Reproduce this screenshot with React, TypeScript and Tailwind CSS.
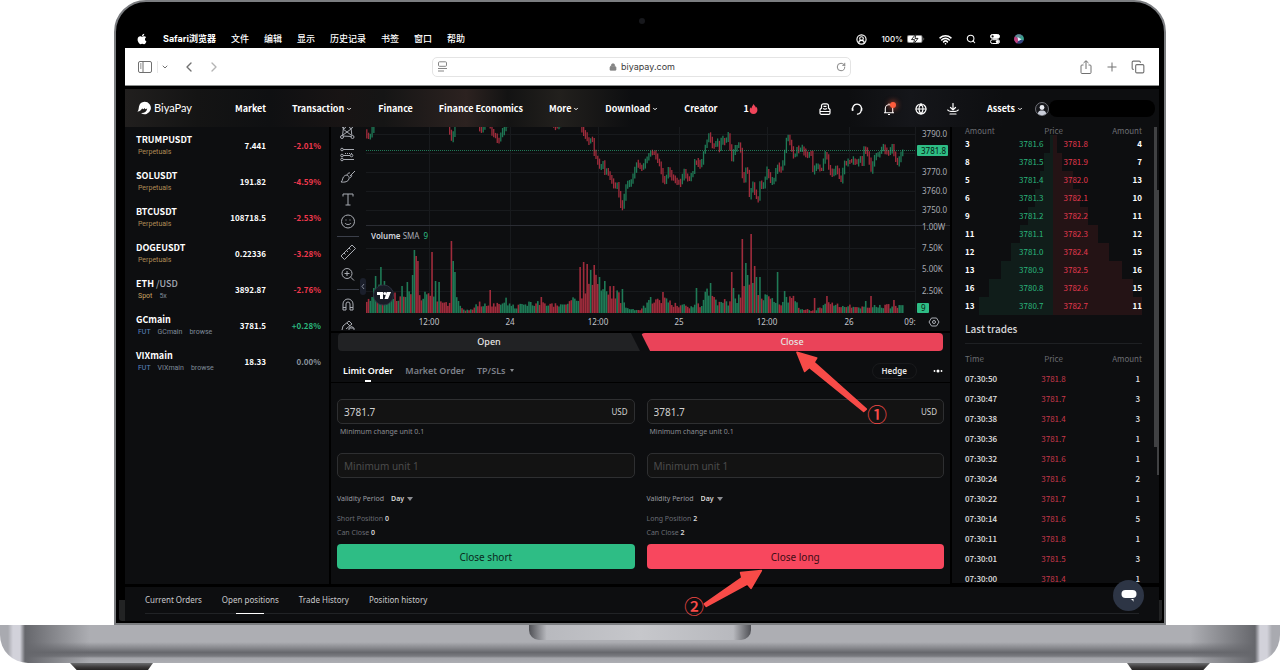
import React, { useState } from 'react';
import { FaApple } from 'react-icons/fa';
import {
    ChevronDown,
    ChevronLeft,
    ChevronRight,
    CircleUserRound,
    Copy,
    Globe,
    Lock,
    Plus,
    RotateCw,
    Search,
    Wifi
} from 'lucide-react';

const UP = '#1f7a56';
const DOWN = '#a02c3c';

const menus = ['文件', '编辑', '显示', '历史记录', '书签', '窗口', '帮助'];

const navItems = [
    { label: 'Market' },
    { label: 'Transaction', menu: true },
    { label: 'Finance' },
    { label: 'Finance Economics' },
    { label: 'More', menu: true },
    { label: 'Download', menu: true },
    { label: 'Creator' }
];

const watchlist = [
    { name: 'TRUMPUSDT', tags: ['Perpetuals'], price: '7.441', change: '-2.01%' },
    { name: 'SOLUSDT', tags: ['Perpetuals'], price: '191.82', change: '-4.59%' },
    { name: 'BTCUSDT', tags: ['Perpetuals'], price: '108718.5', change: '-2.53%' },
    { name: 'DOGEUSDT', tags: ['Perpetuals'], price: '0.22336', change: '-3.28%' },
    { name: 'ETH', quote: '/USD', tags: ['Spot', '5x'], price: '3892.87', change: '-2.76%' },
    { name: 'GCmain', tags: ['FUT', 'GCmain', 'browse'], price: '3781.5', change: '+0.28%' },
    { name: 'VIXmain', tags: ['FUT', 'VIXmain', 'browse'], price: '18.33', change: '0.00%' }
];

// [bid amount, bid price, ask price, ask amount, bid depth, ask depth]
const book: [number, string, string, number, number, number][] = [
    [3, '3781.6', '3781.8', 4, 3, 3],
    [8, '3781.5', '3781.9', 7, 9, 8],
    [5, '3781.4', '3782.0', 13, 13, 19],
    [6, '3781.3', '3782.1', 10, 18, 26],
    [9, '3781.2', '3782.2', 11, 25, 34],
    [11, '3781.1', '3782.3', 12, 33, 44],
    [12, '3781.0', '3782.4', 15, 42, 55],
    [13, '3780.9', '3782.5', 16, 53, 68],
    [16, '3780.8', '3782.6', 15, 65, 79],
    [13, '3780.7', '3782.7', 11, 75, 88]
];

const trades = [
    ['07:30:50', '3781.8', '1'],
    ['07:30:47', '3781.7', '3'],
    ['07:30:38', '3781.4', '3'],
    ['07:30:36', '3781.7', '1'],
    ['07:30:32', '3781.6', '1'],
    ['07:30:24', '3781.6', '2'],
    ['07:30:22', '3781.7', '1'],
    ['07:30:14', '3781.6', '5'],
    ['07:30:11', '3781.8', '1'],
    ['07:30:01', '3781.5', '3'],
    ['07:30:00', '3781.4', '1']
];

const pricePath: [number, number][] = [
    [0, 6], [3, 11], [5, 9], [7, 3], [9, -8], [80, -14], [84, 1], [87, 15], [89, 0], [92, -12], [112, -8], [115, 3], [117, 4], [119, -4],
    [124, -5], [127, 5], [133, 14], [137, 6], [140, -1], [146, -12], [184, -10], [190, 0], [193, 0], [197, -10], [214, -6], [217, 3],
    [220, 8], [224, 15], [227, 11], [229, 25], [232, 33], [235, 41], [238, 35], [239, 47], [242, 43], [246, 51], [249, 60],
    [252, 56], [254, 68], [256, 79], [258, 80], [260, 63], [262, 58], [266, 55], [269, 45], [272, 35], [274, 41], [278, 40],
    [282, 31], [286, 25], [290, 27], [295, 38], [299, 58], [303, 43], [307, 51], [315, 57], [319, 45], [324, 53], [328, 45],
    [330, 33], [336, 39], [339, 23], [344, 8], [348, 20], [352, 13], [354, 23], [357, 11], [360, 15], [364, 7], [366, 35],
    [369, 23], [375, 17], [376, 29], [378, 59], [382, 36], [385, 78], [387, 53], [390, 68], [393, 74], [395, 56], [398, 60],
    [402, 43], [406, 55], [409, 53], [412, 39], [417, 43], [419, 28], [422, 9], [426, 18], [429, 31], [432, 23], [437, 21],
    [441, 28], [446, 26], [448, 46], [452, 36], [456, 45], [461, 23], [463, 39], [467, 48], [471, 41], [476, 54], [479, 37],
    [487, 33], [492, 36], [495, 30], [497, 39], [499, 20], [503, 28], [506, 43], [510, 29], [514, 27], [518, 20], [523, 28],
    [527, 19], [532, 37], [536, 28], [538, 23]
];

const volumeBase: [number, number][] = [
    [0, 10], [14, 24], [29, 18], [39, 17], [45, 24], [54, 18], [64, 18], [70, 11], [81, 8], [90, 17], [94, 4], [104, 3],
    [114, 10], [121, 6], [129, 10], [139, 12], [149, 5], [154, 12], [164, 10], [179, 9], [192, 8], [204, 11], [211, 16],
    [219, 28], [224, 32], [234, 28], [244, 22], [254, 15], [262, 3], [274, 4], [282, 10], [296, 14], [309, 8], [324, 6],
    [334, 8], [340, 22], [349, 12], [364, 10], [374, 18], [380, 32], [394, 22], [402, 14], [414, 10], [424, 17], [434, 4],
    [444, 3], [454, 5], [464, 10], [474, 6], [484, 7], [494, 5], [509, 8], [519, 7], [534, 7], [538, 7]
];

const volumeSpikes: [number, number, string][] = [
    [7, 25, UP], [9, 37, UP], [14, 46, UP], [17, 32, UP], [35, 27, UP], [40, 31, UP], [45, 38, UP], [47, 63, UP],
    [49, 57, DOWN], [51, 52, DOWN], [52, 59, DOWN], [66, 61, DOWN], [68, 32, UP], [73, 31, UP], [84, 72, DOWN],
    [86, 52, UP], [88, 41, UP], [123, 23, DOWN], [174, 16, DOWN], [213, 46, DOWN], [217, 51, DOWN], [220, 49, DOWN],
    [224, 43, UP], [228, 48, DOWN], [233, 36, UP], [238, 32, UP], [247, 27, DOWN], [256, 24, UP], [284, 16, UP],
    [297, 21, DOWN], [330, 25, UP], [344, 30, UP], [365, 41, DOWN], [367, 25, UP], [376, 74, DOWN], [379, 50, UP],
    [381, 38, UP], [385, 79, DOWN], [387, 47, DOWN], [390, 36, UP], [394, 36, UP], [411, 41, UP], [417, 22, UP],
    [447, 15, DOWN], [461, 17, DOWN], [499, 12, UP], [505, 17, DOWN], [527, 13, DOWN]
];

const interpolate = (points: [number, number][], x: number) => {
    const i = Math.max(1, points.findIndex(p => p[0] >= x));
    const [x0, y0] = points[i - 1];
    const [x1, y1] = points[i];
    return y0 + ((y1 - y0) * (x - x0)) / (x1 - x0);
};

// repeatable jitter so the bars do not change between renders
const jitter = (n: number) => {
    const v = Math.sin(n * 127.1 + 11.7) * 43758.5453;
    return v - Math.floor(v);
};

const STEP = 1.763;
const bars = Array.from({ length: 305 }, (_, i) => {
    const x = i * STEP;
    const open = interpolate(pricePath, x);
    const close = interpolate(pricePath, Math.min(x + STEP, 538));
    const rising = Math.abs(close - open) > 1 ? close < open : jitter(i) > 0.5;
    const spike = volumeSpikes.find(s => Math.abs(s[0] - x) < STEP / 2);
    return {
        x,
        top: Math.min(open, close) - 1 - jitter(i + 400) * 3,
        bottom: Math.max(open, close) + 1 + jitter(i + 800) * 3,
        color: rising ? UP : DOWN,
        volume: spike ? spike[1] : interpolate(volumeBase, x) * (0.65 + jitter(i + 50) * 0.65),
        volumeColor: spike ? spike[2] : rising ? UP : DOWN
    };
});

const MenuBar = () => (
    <div className="flex h-[18px] items-center justify-between pr-[135px] pl-[11px] font-['Inter','Noto_Sans_CJK_SC',sans-serif] text-[9px] font-medium text-white">
        <div className="flex items-center gap-[15px]">
            <FaApple className="h-3 w-3" />
            <span className="font-bold">Safari浏览器</span>
            {menus.map(m => <span key={m}>{m}</span>)}
        </div>
        <div className="flex items-center gap-[14px]">
            <CircleUserRound className="h-[11px] w-[11px]" strokeWidth={2.5} />
            <span className="flex items-center gap-1 text-[8px]">
                100%
                <svg viewBox="0 0 18 10" className="h-[10px] w-[18px]">
                    <rect x="0" y="1" width="15.5" height="8" rx="2" fill="#8b8b8b" />
                    <rect x="1" y="2" width="13.500" height="6" rx="1" fill="#fff" />
                    <path d="M16.500 3.500v3c.8-.3 1-2.700 0-3z" fill="#8b8b8b" />
                    <path d="M9 0L4.500 5.600h3L6.500 10 11 4.400H8z" fill="#fff" stroke="#111" strokeWidth=".9" />
                </svg>
            </span>
            <Wifi className="h-[13px] w-[13px]" strokeWidth={3} />
            <Search className="h-[10px] w-[10px]" strokeWidth={2.5} />
            <svg viewBox="0 0 10 10" className="h-[10px] w-[10px]" fill="none" stroke="#fff">
                <rect x=".5" y=".5" width="9" height="3.800" rx="1.900" fill="#fff" />
                <rect x=".5" y="5.700" width="9" height="3.800" rx="1.900" />
                <circle cx="2.600" cy="2.400" r="1.100" fill="#111" stroke="none" />
                <circle cx="7.400" cy="7.600" r="1.600" fill="#fff" stroke="none" />
            </svg>
            <svg viewBox="0 0 10 10" className="h-[10px] w-[10px]">
                <circle cx="5" cy="5" r="4.800" fill="#33407c" />
                <path d="M5 5L1 2.300A4.800 4.800 0 0 0 3 9.400z" fill="#c2407f" />
                <path d="M5 5L1 2.300A4.800 4.800 0 0 1 8 1.300z" fill="#5f8d93" />
                <path d="M5 5L8 1.300A4.800 4.800 0 0 1 9.500 6.500z" fill="#3aa38c" />
                <path d="M3.500 3l4 2.300-3.200 2z" fill="#e8f0ff" />
            </svg>
        </div>
    </div>
);

const SafariToolbar = () => (
    <div className="grid h-[38px] grid-cols-[1fr_420px_1fr] items-center border-b border-[#8c8f8e] bg-white text-[#707070]">
        <div className="flex items-center pl-[13px]">
            <button aria-label="Sidebar">
                <svg viewBox="0 0 14 12" className="h-3 w-[14px]" fill="none" stroke="#6f6f6f">
                    <rect x=".5" y=".5" width="13" height="11" rx="1.500" />
                    <path d="M5 .5v11M2 3h1.500M2 5h1.500M2 7h1.500" />
                </svg>
            </button>
            <span className="ml-[5px] h-3 w-px bg-[#e8e8e8]" />
            <ChevronDown className="ml-[3px] h-2 w-2" strokeWidth={3} />
            <ChevronLeft className="ml-3 h-4 w-4" strokeWidth={2} />
            <ChevronRight className="ml-[9px] h-4 w-4 text-[#b4b4b4]" strokeWidth={2} />
        </div>
        <div className="mr-px flex h-5 items-center justify-between rounded-[5px] border border-[#e4e4e4] px-1">
            <svg viewBox="0 0 11 11" className="h-[11px] w-[11px]" fill="none" stroke="#858585">
                <rect x="1.500" y=".8" width="8" height="4.500" rx="1" />
                <path d="M1 7.500h9M1 10h6" />
            </svg>
            <span className="flex items-center gap-1 font-['Inter',sans-serif] text-[9px] text-[#3c3c3c]">
                <Lock className="h-2 w-2 fill-[#858585] text-[#858585]" />
                biyapay.com
            </span>
            <RotateCw className="h-[10px] w-[10px]" strokeWidth={2} />
        </div>
        <div className="flex items-center justify-end gap-3 pr-[14px]">
            <button aria-label="Share">
                <svg viewBox="0 0 14 14" className="h-[14px] w-[14px]" fill="none" stroke="#707070">
                    <path d="M4.500 5H3a1 1 0 0 0-1 1v6.500a1 1 0 0 0 1 1h8a1 1 0 0 0 1-1V6a1 1 0 0 0-1-1H9.500M7 9V1M4.500 3L7 .7 9.500 3" />
                </svg>
            </button>
            <Plus className="h-[14px] w-[14px]" strokeWidth={1.7} />
            <Copy className="h-[14px] w-[14px]" strokeWidth={1.9} />
        </div>
    </div>
);

const NavBar = () => (
    <header className="flex h-[38px] items-center justify-between bg-[#0d0e10] bg-[linear-gradient(90deg,#211f1e_0,#141414_7%,#0f1012_14%,#181414_21%,#151515_25%,#2c2220_33%,#131313_37%,#22201d_42%,#0d0e10_49%,#0d0e10_70%,#15161a_76%,#0d0e10_85%)] pl-3 font-['Noto_Sans_CJK_SC',sans-serif] text-[9px] leading-3 font-bold text-white">
        <div className="flex items-center">
            <a href="#" className="flex w-[70px] items-center gap-[3px] font-['Lato',sans-serif] text-[11px] font-normal">
                <svg viewBox="0 0 14 14" className="h-[14px] w-[14px]" fill="#fff">
                    <path d="M7.500 .8A6.200 6.200 0 1 1 4 12C6.500 12.500 9.800 11 10.200 7.500L8.300 8.300 7.700 7 6.500 8.300 5.200 7.500C4 8.500 3 10.800.3 10.600 1.700 9.500 1.500 8 2 5.500A6 6 0 0 1 7.500.8z" />
                </svg>
                BiyaPay
            </a>
            <nav className="ml-7 flex items-center gap-[26px] pt-px">
                {navItems.map(item => (
                    <a key={item.label} href="#" className="flex items-center gap-[2px] whitespace-nowrap">
                        {item.label}
                        {item.menu && <ChevronDown className="h-[6px] w-[6px]" strokeWidth={4} />}
                    </a>
                ))}
                <a href="#" className="flex items-center">
                    1
                    <svg viewBox="0 0 10 12" className="h-[10px] w-[9px]" fill="#f0455a">
                        <path d="M5 0C6 2 8 3 7.800 4.500 8.300 4.300 8.500 3.800 8.500 3.300 11 7 9.500 12 5 12S-.8 7.500 1.500 4C1.800 5 2.300 5.300 2.700 5.300 2.500 3 4.500 2 5 0z" />
                    </svg>
                </a>
            </nav>
        </div>
        <div className="flex items-center pt-px pr-1">
            <div className="flex items-center gap-5">
                <button aria-label="Orders">
                    <svg viewBox="0 0 12 12" className="h-3 w-3" fill="none" stroke="#fff" strokeWidth="1.200" strokeLinejoin="round">
                        <path d="M2.500 5.500V2.800A2 2 0 0 1 4.500.8h3a2 2 0 0 1 2 2v2.700" />
                        <path d="M2.500 5L1 6.500V10a1.300 1.300 0 0 0 1.300 1.300h7.400A1.300 1.300 0 0 0 11 10V6.500L9.500 5M1 8.500h10" />
                        <path d="M4.500 3.300h3M4.300 5.300c.6 1.200 2.800 1.200 3.400 0" />
                    </svg>
                </button>
                <button aria-label="Support">
                    <svg viewBox="0 0 12 12" className="h-3 w-3" fill="none" stroke="#fff" strokeWidth="1.300" strokeLinecap="round">
                        <path d="M2 7.200A4.400 4.400 0 1 1 10.200 7C10 9.500 8.500 10.900 6.500 11.200" />
                        <path d="M1.300 5.300v2M10.700 5.300v2" />
                    </svg>
                </button>
                <button aria-label="Notifications" className="relative">
                    <svg viewBox="0 0 12 12" className="h-3 w-3" fill="none" stroke="#fff" strokeWidth="1.100" strokeLinejoin="round">
                        <path d="M2.300 9.500V5.500a3.700 3.700 0 0 1 7.400 0v4M1 9.800h10M5 11.500h2M6 .5v1" />
                    </svg>
                    <span className="absolute -top-px -right-px h-[6px] w-[6px] rounded-full bg-[#ff5c3c] shadow-[0_0_5px_2px_rgba(255,92,60,0.4)]" />
                </button>
                <Globe className="h-3 w-3" strokeWidth={2.4} />
                <button aria-label="Download">
                    <svg viewBox="0 0 12 12" className="h-3 w-3" fill="none" stroke="#fff" strokeWidth="1.200" strokeLinecap="round">
                        <path d="M6 .5v6M3.500 4.500L6 7l2.500-2.500M.8 7c1 2 9.400 2 10.400 0M3 11h6" />
                    </svg>
                </button>
            </div>
            <a href="#" className="ml-7 flex items-center gap-[2px]">
                Assets
                <ChevronDown className="h-[6px] w-[6px]" strokeWidth={4} />
            </a>
            <svg viewBox="0 0 14 14" className="ml-3 h-[14px] w-[14px]">
                <circle cx="7" cy="7" r="6.500" fill="#16171b" stroke="#8a8d94" strokeWidth=".8" />
                <circle cx="7" cy="5.500" r="2.400" fill="#e9ebf2" />
                <path d="M2.800 11.500C3.300 9 5 8.500 7 8.500s3.700.5 4.200 3C9 13.800 5 13.800 2.800 11.500z" fill="#c9cdd9" />
            </svg>
            <span className="h-[17px] w-[106px] rounded-lg bg-black" />
        </div>
    </header>
);

const tagColor = (tag: string) => {
    switch (tag) {
        case 'Perpetuals': return 'text-[#b08c56]';
        case 'Spot': return 'text-[#c9a262]';
        case 'FUT': return 'text-[#5c88c0]';
        default: return 'text-[#7f8b99]';
    }
};

const changeColor = (change: string) => {
    if (change.startsWith('-')) return 'text-[#f0384d]';
    return change.startsWith('+') ? 'text-[#2ab67c]' : 'text-[#8b949e]';
};

const Watchlist = () => (
    <table className="mt-px w-full font-['Noto_Sans_CJK_SC',sans-serif]">
        <tbody>
            {watchlist.map(row => (
                <tr key={row.name} className="h-9 text-[8px] font-bold">
                    <td className="pl-[11px]">
                        <div className="text-[9px] leading-3 text-white">
                            {row.name} {row.quote && <span className="font-medium text-[#a5abb5]">{row.quote}</span>}
                        </div>
                        <div className="flex gap-[7px] pl-[2px] font-['Roboto',sans-serif] text-[7px] leading-3 font-normal">
                            {row.tags.map(t => <span key={t} className={tagColor(t)}>{t}</span>)}
                        </div>
                    </td>
                    <td className="text-right text-white">{row.price}</td>
                    <td className={`w-[63px] pr-2 text-right ${changeColor(row.change)}`}>{row.change}</td>
                </tr>
            ))}
        </tbody>
    </table>
);

const ChartTools = () => (
    <svg viewBox="0 0 35 203" className="h-[203px] w-[35px] shrink-0" fill="none" stroke="#a9acb3" strokeWidth="1">
        {/* pattern */}
        <path d="M11.500 9L12.500 0M11.500 9L21 9.500M21 9.500L20 1M12 2L20 8M12 8L20 2" />
        <circle cx="11" cy="10" r="1.500" fill="#0d0e10" /><circle cx="21.500" cy="10" r="1.500" fill="#0d0e10" />
        <circle cx="13" cy="0" r="1.500" /><circle cx="20" cy="0" r="1.500" />
        {/* prediction */}
        <path d="M12 22.500h11M12 28.500h7M12 32.500h11" />
        <path d="M14 26.500h7" strokeDasharray="1 1" />
        <circle cx="11" cy="22.500" r="1.300" fill="#0d0e10" /><circle cx="11" cy="28.500" r="1.300" fill="#0d0e10" />
        <circle cx="20.500" cy="28.500" r="1.300" fill="#0d0e10" /><circle cx="11" cy="32.500" r="1.300" fill="#0d0e10" />
        {/* brush */}
        <path d="M10 55c2-1 1-5 4-6.500 2-1 5 .5 4 3.500-1 2.800-4 3.500-8 3zM16 48.500c0-2 2-3 3-2.500M19 50.500c1.500 0 2-2 1.500-3M19 49L24 44" />
        {/* text */}
        <path d="M12 69.500V67h10v2.500M17 67v11M14.500 78h5" />
        {/* emoji */}
        <circle cx="17" cy="94.500" r="6.500" />
        <path d="M14 96c1 2 5 2 6 0M14.500 93h1M18.500 93h1" />
        <path d="M6 109.500h22M6 162.500h22" stroke="#3b3f4a" />
        {/* ruler */}
        <path d="M10 129l11-11 3.500 3.500-11 11zM13 126l1.500 1.500M15.500 123.500l1.500 1.500M18 121l1.500 1.500" />
        {/* zoom */}
        <circle cx="16" cy="146.500" r="5" />
        <path d="M19.700 150.200L23 153.500M13.500 146.500h5M16 144v5" />
        {/* magnet */}
        <path d="M12 183v-6a5 5 0 0 1 10 0v6h-3v-6a2 2 0 0 0-4 0v6zM12 180.500h3M19 180.500h3" />
        {/* pencil and lock */}
        <path d="M11 203l1-4 6-5 3 3-6 5M16 196l3 3M18 204v-3h5v3M19 201c0-2 3-2 3 0" />
    </svg>
);

const gridX = [63, 144, 232, 313, 401, 483, 549];
const gridY = [7, 26, 45, 64, 83, 121, 142, 164];
const priceTicks: [string, number][] = [['3790.0', 10], ['3770.0', 48], ['3760.0', 67], ['3750.0', 86]];
const volumeTicks: [string, number][] = [['1.00W', 103], ['7.50K', 124], ['5.00K', 145], ['2.50K', 167]];
const timeTicks: [string, number][] = [['12:00', 63], ['24', 144], ['12:00', 232], ['25', 313], ['12:00', 401], ['26', 483], ['09:', 544]];

const Chart = () => (
    <svg viewBox="0 0 584 204" className="min-w-0 flex-1 overflow-visible font-['Noto_Sans',sans-serif]" fill="#a9acb3" fontSize="8">
        {gridX.map(x => <path key={x} d={`M${x + 0.5} 0V186`} stroke="#181a1d" />)}
        {gridY.map(y => <path key={y} d={`M0 ${y + 0.5}H549`} stroke="#181a1d" />)}
        {bars.map(b => (
            <g key={b.x}>
                <path d={`M${b.x + 0.8} ${b.top}V${b.bottom}`} stroke={b.color} strokeWidth="1.3" />
                <rect x={b.x} y={186 - b.volume} width="1.600" height={b.volume} fill={b.volumeColor} />
            </g>
        ))}
        <path d="M0 98.500H584" stroke="#2b2d34" />
        <path d="M0 23.500H549" stroke="#2ebd85" strokeDasharray="1 1" opacity=".6" />
        {priceTicks.map(([t, y]) => <text key={t} x="556" y={y}>{t}</text>)}
        <rect x="551" y="18" width="31" height="11" rx="1" fill="#2ebd85" />
        <text x="555" y="27" fill="#06180f">3781.8</text>
        {volumeTicks.map(([t, y]) => <text key={t} x="556" y={y}>{t}</text>)}
        <rect x="551" y="176" width="12" height="10" rx="1" fill="#2ebd85" />
        <text x="555" y="184" fill="#06180f">9</text>
        {timeTicks.map(([t, x]) => <text key={x} x={x} y="198" textAnchor="middle" fill="#c4c6cc">{t}</text>)}
        <text x="5" y="112"><tspan fill="#d1d4dc" fontWeight="600">Volume</tspan> SMA <tspan dx="2" fill="#2ebd85">9</tspan></text>
        <path d="M565.500 191h5l2.500 4-2.500 4h-5l-2.500-4z" fill="none" stroke="#a9acb3" />
        <circle cx="568" cy="195" r="1.500" fill="none" stroke="#a9acb3" />
        <rect x="-6" y="151" width="6" height="17" rx="3" fill="#1b1f2b" />
        <path d="M-2 157l-2 2.500 2 2.500" fill="none" stroke="#9aa0ad" strokeWidth=".8" />
        <circle cx="17.500" cy="168" r="10" fill="#181b25" stroke="#2c3040" />
        <path d="M11 165h6v7h-3v-4h-3zM20.700 165H25l-3 7h-3.500z" fill="#fff" />
        <circle cx="18.800" cy="166.600" r="1.500" fill="#fff" />
    </svg>
);

const Caret = () => (
    <svg viewBox="0 0 6 4" className="pointer-events-none h-[4px] w-[6px]" fill="#8b8d92"><path d="M0 0h6L3 4z" /></svg>
);

interface OrderSideProps {
    side: 'Short' | 'Long';
    position: number;
    buttonClass: string;
}

const OrderSide = ({ side, position, buttonClass }: OrderSideProps) => {
    const [price, setPrice] = useState('3781.7');
    const [amount, setAmount] = useState('');

    return (
        <div className="flex flex-col text-[7px] leading-[14px] text-[#6a6d74]">
            <div className="flex h-[25px] items-center rounded-[5px] border border-[#2e2f31] bg-[#131313] px-[6px] text-[8px] text-[#d0d0d0]">
                <input
                    id={`price-${side}`}
                    className="min-w-0 flex-1 bg-transparent text-[10px] outline-none"
                    value={price}
                    onChange={(e) => setPrice(e.target.value)}
                />
                USD
            </div>
            <label htmlFor={`price-${side}`} className="mt-px pl-[3px] text-[#8a8c90]">Minimum change unit 0.1</label>
            <input
                aria-label={`${side} amount`}
                placeholder="Minimum unit 1"
                className="mt-[14px] h-[25px] rounded-[5px] border border-[#2e2f31] bg-[#131313] px-[6px] text-[10px] text-[#d0d0d0] outline-none placeholder:text-[#4b4b4b]"
                value={amount}
                onChange={(e) => setAmount(e.target.value)}
            />
            <div className="mt-[14px] flex items-center">
                <label htmlFor={`validity-${side}`} className="text-[#9a9ca0]">Validity Period</label>
                <select id={`validity-${side}`} className="ml-[7px] w-4 appearance-none font-semibold text-[#d8d8d8] outline-none">
                    <option>Day</option>
                </select>
                <Caret />
            </div>
            <div className="mt-[6px]">{side} Position <b className="font-semibold text-[#d8d8d8]">{position}</b></div>
            <div>Can Close <b className="font-semibold text-[#d8d8d8]">{position}</b></div>
            <button className={`mt-[4px] h-[25px] rounded-[4px] text-[10px] ${buttonClass}`}>Close {side.toLowerCase()}</button>
        </div>
    );
};

// step markers pointing at the Close tab and the Close long button
const StepMarkers = () => (
    <svg viewBox="0 0 780 870" className="pointer-events-none absolute -top-[3px] left-1/2 z-10 h-[290px] w-[260px] font-['Noto_Sans_CJK_SC',sans-serif]" fill="#f84b48" fontSize="59" fontWeight="500">
        <g stroke="#f84b48" strokeWidth="5" strokeLinejoin="round">
            <path d="M468 67L527 84 519 97 676 237 668 244 505 112 491 124z" />
            <path d="M361 722L330 775 319 762 196 829 190 822 303 743 299 728z" />
        </g>
        <text x="708" y="277" textAnchor="middle">①</text>
        <text x="159" y="852" textAnchor="middle">②</text>
    </svg>
);

const OrderForm = () => (
    <section className="relative h-[253px] border-t-2 border-black bg-[#0d0e10] font-['Noto_Sans',sans-serif]">
        <div className="flex h-[18px] gap-px px-[7px] text-[9px] font-medium text-[#e6e6e6]">
            <button className="flex-1 rounded-l-[4px] bg-[#212224] [clip-path:polygon(0_0,97%_0,100%_100%,0_100%)]">Open</button>
            <button className="flex-1 rounded-[4px] bg-[#ea4359] [clip-path:polygon(0_0,100%_0,100%_100%,3%_100%)]">Close</button>
        </div>
        <div className="flex h-8 items-center justify-between border-b border-black pr-[7px] pl-3 text-[9px] font-semibold text-[#7d818a]">
            <div className="flex h-full items-center gap-3 pt-2">
                <button className="relative text-white">
                    Limit Order
                    <span className="absolute -bottom-[5px] left-1/2 h-[2px] w-[6px] -translate-x-1/2 bg-white" />
                </button>
                <button>Market Order</button>
                <button className="flex items-center gap-1">
                    TP/SLs
                    <svg viewBox="0 0 4 3" className="h-[3px] w-[4px]" fill="#8b8d92"><path d="M0 0h4L2 3z" /></svg>
                </button>
            </div>
            <div className="flex items-center gap-4 pt-2">
                <button className="rounded-full border border-[#191a1c] px-[9px] py-px text-[8px] text-[#e6e6e6]">Hedge</button>
                <svg viewBox="0 0 10 4" className="h-[4px] w-[10px]" fill="#fff">
                    <circle cx="1.500" cy="2" r=".9" /><circle cx="5" cy="2" r="1.500" /><circle cx="8.500" cy="2" r=".9" />
                </svg>
            </div>
        </div>
        <div className="grid grid-cols-2 gap-3 px-[6px] pt-4">
            <OrderSide side="Short" position={0} buttonClass="bg-[#2ebd85] text-[#0b2a1d]" />
            <OrderSide side="Long" position={2} buttonClass="bg-[#f8475e] text-[#3d0d15]" />
        </div>
        <StepMarkers />
    </section>
);

const depthStyle = (bid: number, ask: number) => {
    const a = 50 - (bid / 177) * 100;
    const b = 50 + (ask / 177) * 100;
    return {
        background: `linear-gradient(to right, transparent ${a}%, #101d1a ${a}%, #101d1a 50%, #241315 50%, #241315 ${b}%, transparent ${b}%)`
    };
};

const MarketDepth = () => (
    <aside className="flex h-[456px] w-[207px] bg-[#0d0e10] font-['Noto_Sans_CJK_SC',sans-serif] text-[8px]">
        <div className="flex-1 pr-3 pl-[13px]">
            <table className="w-full table-fixed">
                <thead>
                    <tr className="h-2 leading-2 text-[#6b6d72]">
                        <th className="text-left font-normal">Amount</th>
                        <th colSpan={2} className="font-normal">Price</th>
                        <th className="text-right font-normal">Amount</th>
                    </tr>
                </thead>
                <tbody>
                    {book.map(([bidAmount, bid, ask, askAmount, bidDepth, askDepth]) => (
                        <tr key={bid} className="h-[18px] font-bold text-white" style={depthStyle(bidDepth, askDepth)}>
                            <td>{bidAmount}</td>
                            <td className="pr-[10px] text-right font-normal text-[#2ab67c]">{bid}</td>
                            <td className="pl-[10px] font-normal text-[#e5394f]">{ask}</td>
                            <td className="text-right">{askAmount}</td>
                        </tr>
                    ))}
                </tbody>
            </table>
            <h2 className="border-b border-[#1e2023] pt-[5px] pb-[5px] text-[10px] leading-[18px] font-medium text-[#d6d7d9]">Last trades</h2>
            <table className="mt-[5px] w-full table-fixed">
                <thead>
                    <tr className="h-5 text-[#6b6d72]">
                        <th className="text-left font-normal">Time</th>
                        <th className="font-normal">Price</th>
                        <th className="text-right font-normal">Amount</th>
                    </tr>
                </thead>
                <tbody>
                    {trades.map(([time, price, amount]) => (
                        <tr key={time} className="h-5 font-medium text-[#e4e4e4]">
                            <td>{time}</td>
                            <td className="text-center font-normal text-[#c9394c]">{price}</td>
                            <td className="pr-[2px] text-right">{amount}</td>
                        </tr>
                    ))}
                </tbody>
            </table>
        </div>
        <div className="h-[320px] w-[3px] bg-[#404143]" />
        <div className="mt-[63px] h-[285px] w-[2px] bg-[#404143]" />
    </aside>
);

const bottomTabs = ['Current Orders', 'Open positions', 'Trade History', 'Position history'];

const BottomTabs = () => (
    <section className="relative mt-[3px] h-[34px] bg-[#0d0e10] px-5 pt-1 font-['Noto_Sans',sans-serif] text-[8px] text-[#c9cacc]">
        <div className="flex h-[23px] gap-5 border-b border-[#212326]">
            {bottomTabs.map(tab => (
                <button key={tab} className="relative h-[18px]">
                    {tab}
                    {tab === 'Open positions' && <span className="absolute -bottom-[5px] left-1/2 h-px w-7 -translate-x-1/2 bg-white" />}
                </button>
            ))}
        </div>
        <span className="absolute bottom-0 -left-[6px] h-[21px] w-[6px] rounded-bl-[3px] bg-[#222324]" />
        <span className="absolute -right-[3px] bottom-0 h-[21px] w-[3px] rounded-br-[3px] bg-[#222324]" />
        <button aria-label="Chat" className="absolute -top-[7px] right-[15px] z-20 flex h-[31px] w-[31px] items-center justify-center rounded-full bg-[#2d3545]">
            <svg viewBox="0 0 16 12" className="h-3 w-4" fill="#fff">
                <rect x=".5" y="0" width="15" height="8" rx="4" />
                <path d="M9.500 9h3v3C12 10.500 11 9.500 9.500 9z" />
            </svg>
        </button>
    </section>
);

const LaptopBase = () => (
    <footer>
        <div className="flex h-[38px] justify-center rounded-b-[28px] bg-[linear-gradient(90deg,#a9aab0_0,#a9aab0_8px,#d2d2da_13px,#d2d2da_20px,#66676c_25px,transparent_90px,transparent_calc(100%-90px),#66676c_calc(100%-25px),#d2d2da_calc(100%-20px),#d2d2da_calc(100%-13px),#a9aab0_calc(100%-8px)),linear-gradient(180deg,#adaeb3_0,#adaeb3_45%,#88898e_60%,#66676c_72%,#7a7b80_82%,#a3a4a9_87%,#adaeb3_100%)]">
            <div className="h-[15px] w-[222px] rounded-b-[10px] bg-[linear-gradient(90deg,#4f5055,#b8b9be_8%,#c6c7cb_50%,#b8b9be_92%,#4f5055)]" />
        </div>
        <div className="flex justify-between px-[70px]">
            <div className="h-[7px] w-[83px] bg-[linear-gradient(180deg,#6c6d70,#3a3838_60%,#252323)] [clip-path:polygon(0_0,100%_0,94%_100%,8%_100%)]" />
            <div className="h-[7px] w-[83px] bg-[linear-gradient(180deg,#6c6d70,#3a3838_60%,#252323)] [clip-path:polygon(0_0,100%_0,92%_100%,6%_100%)]" />
        </div>
    </footer>
);

export default function App() {
    return (
        <div className="min-h-screen overflow-hidden bg-white">
            <div className="mx-[114px] rounded-t-[32px] border-2 border-[#7b7d80] bg-black pr-[5px] pb-[2px] pl-[9px]">
                <div className="flex h-7 items-center justify-center pt-[10px]">
                    <span className="h-[6px] w-[6px] rounded-full bg-[#17181c]" />
                </div>
                <MenuBar />
                <SafariToolbar />
                <div className="mt-[3px]">
                    <NavBar />
                    <main className="flex gap-[2px]">
                        <aside className="w-[204px] bg-[#0d0e10]"><Watchlist /></aside>
                        <div className="flex min-w-0 flex-1 flex-col">
                            <div className="flex h-[204px] overflow-hidden bg-[#0d0e10]">
                                <ChartTools />
                                <Chart />
                            </div>
                            <OrderForm />
                        </div>
                        <MarketDepth />
                    </main>
                    <BottomTabs />
                </div>
            </div>
            <LaptopBase />
        </div>
    );
}
